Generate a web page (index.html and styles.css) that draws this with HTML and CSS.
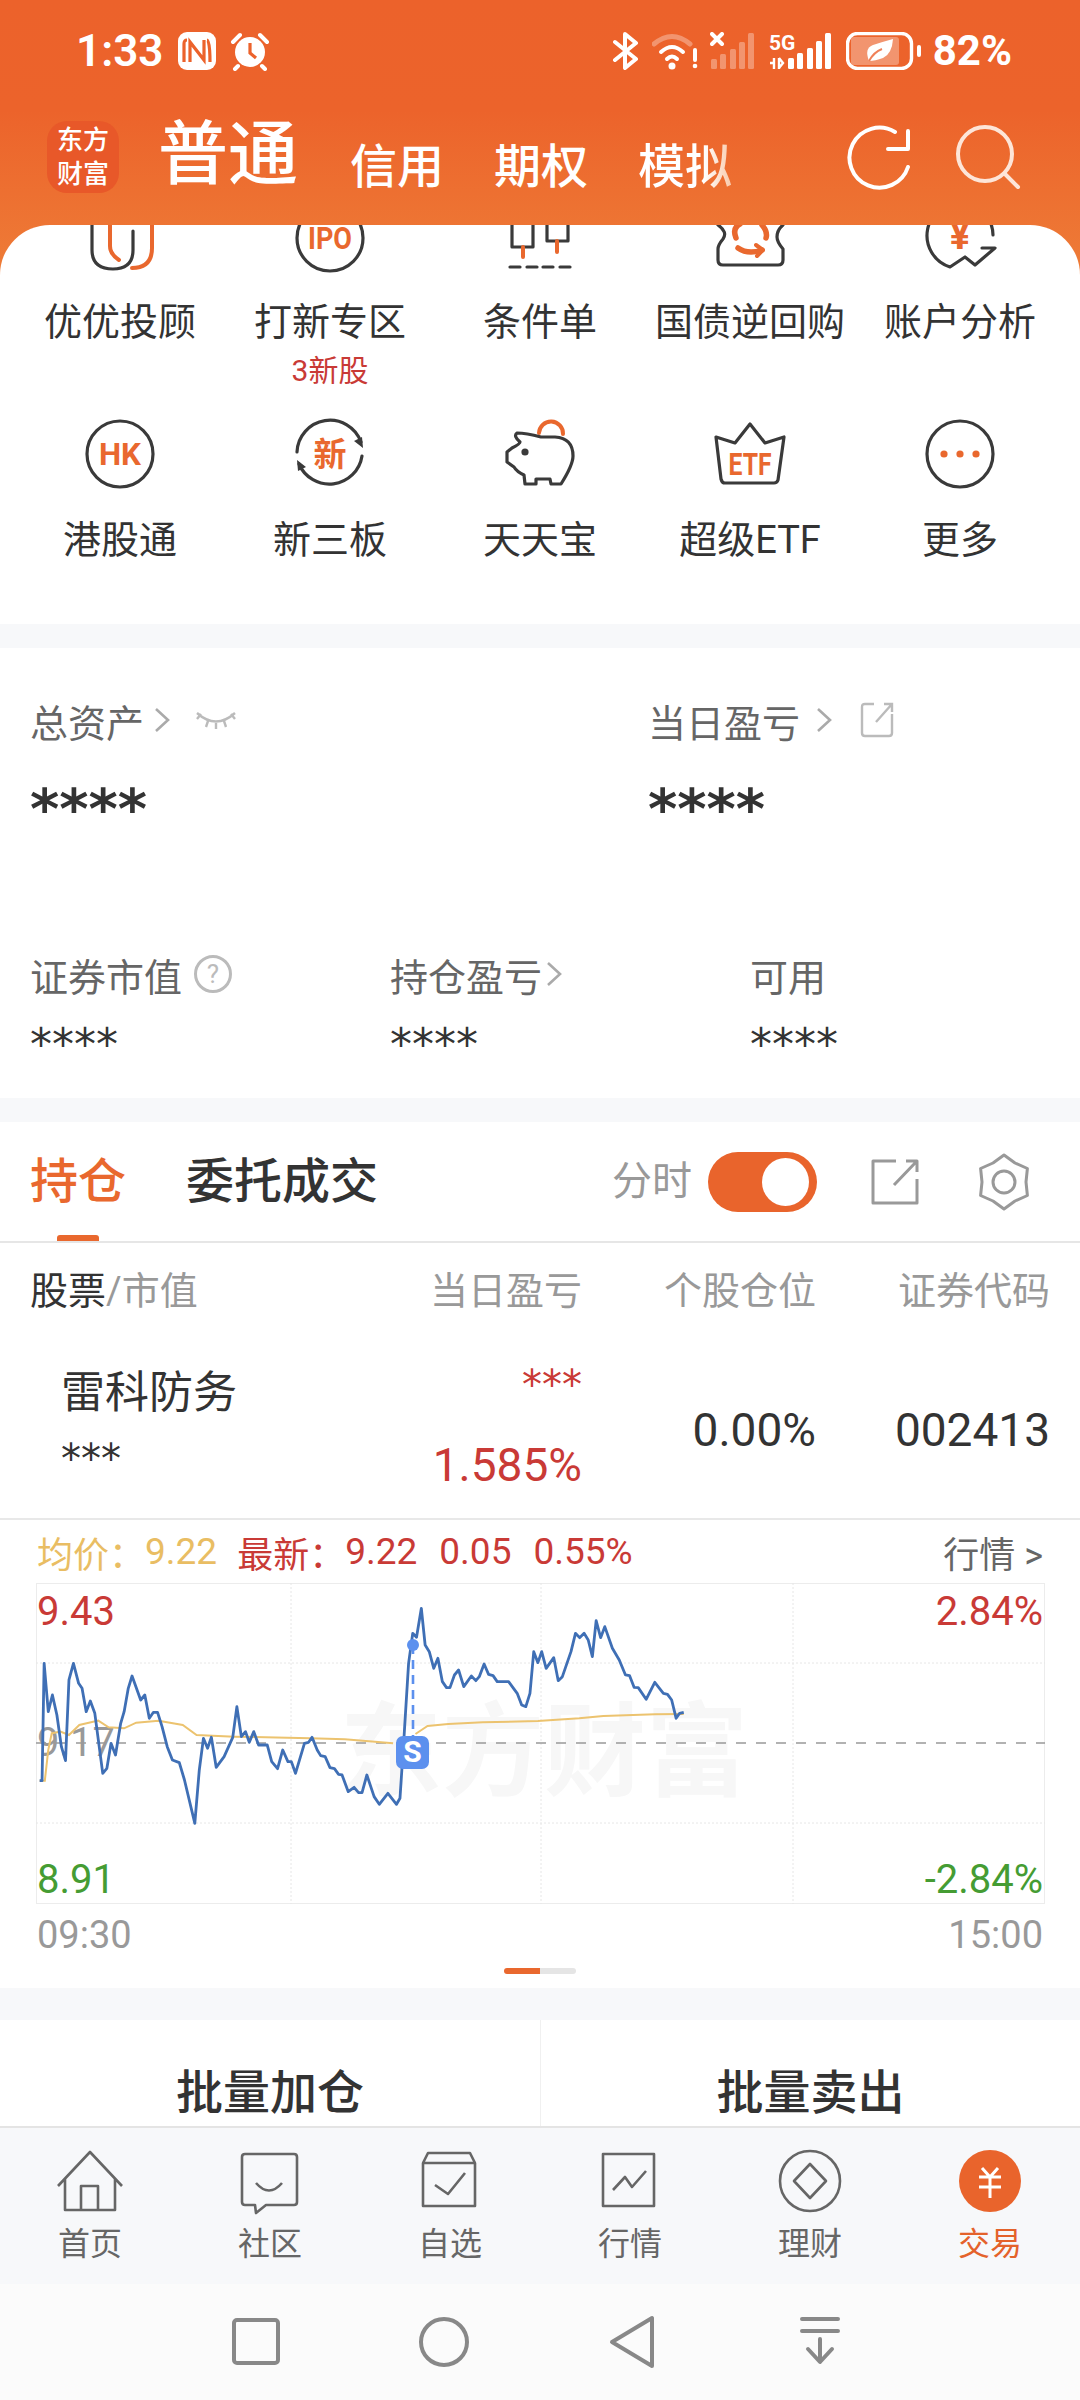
FILE: index.html
```html
<!DOCTYPE html>
<html lang="zh">
<head>
<meta charset="utf-8">
<title>交易</title>
<link rel="stylesheet" href="styles.css">
</head>
<body>
<div class="app">
  <header class="top">
    <div class="status">
      <div class="status-left">
        <span class="clock">1:33</span>
        <svg class="sb" width="40" height="40" viewBox="0 0 40 40"><rect x="1" y="1" width="38" height="38" rx="9" class="w-fill"/><path d="M10 9C7 9 7 11 7 13V31M33 31C33 29 33 9 30 9M13 31V11L27 29V9" class="bg-line"/></svg>
        <svg class="sb" width="40" height="40" viewBox="0 0 40 40"><circle cx="20" cy="21" r="15" class="w-fill"/><path d="M20 12V22L26 27" class="bg-line"/><path d="M3 11L10 4M37 11L30 4M8 35L5 38M32 35L35 38" class="w-line"/></svg>
      </div>
      <div class="status-right">
        <svg width="28" height="38" viewBox="0 0 28 38"><path d="M3 10L24 27L13 36V2L24 11L3 28" class="w-line"/></svg>
        <svg class="gap-s" width="46" height="38" viewBox="0 0 46 38"><path d="M2 12Q20 -3 38 12" class="w-line faint"/><path d="M9 20Q20 10 31 20M15 27Q20 22 25 27" class="w-line"/><circle cx="20" cy="34" r="3.5" class="w-fill"/><path d="M43 18V28" class="w-line"/><circle cx="43" cy="34" r="2.3" class="w-fill"/></svg>
        <svg class="gap-s" width="46" height="38" viewBox="0 0 46 38"><g class="faint"><rect x="1" y="27" width="6" height="10" rx="1.5" class="w-fill"/><rect x="10" y="22" width="6" height="15" rx="1.5" class="w-fill"/><rect x="20" y="17" width="6" height="20" rx="1.5" class="w-fill"/><rect x="29" y="10" width="6" height="27" rx="1.5" class="w-fill"/><rect x="38" y="1" width="6" height="36" rx="1.5" class="w-fill"/></g><path d="M2 2L12 12M12 2L2 12" class="w-line"/></svg>
        <svg class="gap-m" width="64" height="38" viewBox="0 0 64 38"><text x="0" y="18" class="net">5G</text><path d="M5 26V37M1 31H5M10 26V37M10 26L14 31L10 36" class="w-thin"/><rect x="19" y="26" width="6" height="11" rx="1.5" class="w-fill"/><rect x="28" y="21" width="6" height="16" rx="1.5" class="w-fill"/><rect x="38" y="16" width="6" height="21" rx="1.5" class="w-fill"/><rect x="47" y="9" width="6" height="28" rx="1.5" class="w-fill"/><rect x="56" y="1" width="6" height="36" rx="1.5" class="w-fill"/></svg>
        <svg class="gap-m" width="76" height="38" viewBox="0 0 76 38"><rect x="5" y="5" width="48" height="28" rx="3" class="w-fill faint"/><rect x="1.5" y="1.5" width="64" height="35" rx="10" class="w-stroke"/><path d="M23 29Q18 16 27 13Q36 10 47 7Q46 22 37 26Q29 29 23 29Z" class="w-fill"/><path d="M23 29Q28 20 36 17" class="bg-thin"/><rect x="71" y="13" width="4" height="12" rx="2" class="w-fill"/></svg>
        <span class="batt">82%</span>
      </div>
    </div>
    <nav class="acct">
      <div class="logo"><span>东方</span><span>财富</span></div>
      <span class="acct-main">普通</span>
      <div class="acct-subs">
        <span>信用</span><span>期权</span><span class="fade">模拟</span>
      </div>
      <div class="acct-actions">
        <svg width="70" height="70" viewBox="0 0 70 70"><path d="M52 8A30 30 0 1 0 65 43" class="w-line thin"/><path d="M65 7V25H45" class="w-line thin"/></svg>
        <svg class="search" width="70" height="70" viewBox="0 0 70 70"><circle cx="30" cy="30" r="27" class="w-stroke soft"/><path d="M50 50L63 63" class="w-stroke soft"/></svg>
      </div>
    </nav>
  </header>

  <section class="card">
    <div class="entries">
      <div class="entry">
        <svg class="ic" viewBox="0 0 80 80"><path d="M12 20V52Q12 71 33 71Q53 71 53 52V33" class="i-d"/><path d="M30 20V48Q30 56 39 62M72 20V50Q72 70 52 70" class="i-o"/></svg>
        <span class="lbl">优优投顾</span>
      </div>
      <div class="entry">
        <svg class="ic" viewBox="0 0 80 80"><circle cx="40" cy="40" r="33" class="i-d"/><text x="40" y="51" textLength="44" lengthAdjust="spacingAndGlyphs" class="t-o big">IPO</text></svg>
        <span class="lbl">打新专区</span>
        <span class="sub">3新股</span>
      </div>
      <div class="entry">
        <svg class="ic" viewBox="0 0 80 80"><path d="M12 20V49H33V20M47 20V43H68V20" class="i-d"/><path d="M23 49V59M57 43V54" class="i-o"/><path d="M10 69H20M27 69H37M43 69H53M60 69H70" class="i-d"/></svg>
        <span class="lbl">条件单</span>
      </div>
      <div class="entry">
        <svg class="ic" viewBox="0 0 80 80"><path d="M8 27Q18 34 13 41Q8 47 8 51V62Q8 67 13 67H68Q73 67 73 62V51Q67 44 67 39Q67 32 73 27" class="i-d"/><path d="M26 40Q22 30 30 26M52 27Q58 34 56 40M28 50Q38 57 52 52" class="i-o bold"/><path d="M46 47L53 52L47 58" class="i-o"/></svg>
        <span class="lbl">国债逆回购</span>
      </div>
      <div class="entry">
        <svg class="ic" viewBox="0 0 80 80"><path d="M73 37A33 33 0 1 0 30 69L45 59L55 67L75 50H62" class="i-d"/><text x="40" y="51" class="t-o yen">¥</text></svg>
        <span class="lbl">账户分析</span>
      </div>
      <div class="entry low">
        <svg class="ic" viewBox="0 0 80 80"><circle cx="40" cy="40" r="33" class="i-d"/><text x="40" y="51" textLength="42" lengthAdjust="spacingAndGlyphs" class="t-o big">HK</text></svg>
        <span class="lbl">港股通</span>
      </div>
      <div class="entry low">
        <svg class="ic" viewBox="0 0 80 80"><path d="M7 38A33 33 0 0 1 71 28M72 42A33 33 0 0 1 9 50" class="i-d"/><path d="M73 34L64 27L72 23ZM7 46L16 53L8 57Z" class="i-fill"/><text x="40" y="52" class="t-o xin">新</text></svg>
        <span class="lbl">新三板</span>
      </div>
      <div class="entry low">
        <svg class="ic" viewBox="0 0 80 80"><path d="M39 19A12 12 0 0 1 63 20" class="i-o"/><path d="M17 19Q26 19 41 23H55Q73 24 73 42Q73 51 61 70H51L50 65H36V70H25L24 61Q17 58 14 53L7 48V38L12 34Q20 30 20 28Q13 22 17 19Z" class="i-d"/><circle cx="25" cy="38" r="3.6" class="i-fill"/></svg>
        <span class="lbl">天天宝</span>
      </div>
      <div class="entry low">
        <svg class="ic" viewBox="0 0 80 80"><path d="M6 23L25 29L40 10L55 29L74 23L68 66Q67 69 64 69H15Q12 69 11 65Z" class="i-d"/><text x="40" y="61" textLength="43" lengthAdjust="spacingAndGlyphs" class="t-o big">ETF</text></svg>
        <span class="lbl">超级ETF</span>
      </div>
      <div class="entry low">
        <svg class="ic" viewBox="0 0 80 80"><circle cx="40" cy="40" r="33" class="i-d"/><circle cx="24" cy="40" r="3.6" class="o-fill"/><circle cx="40" cy="40" r="3.6" class="o-fill"/><circle cx="56" cy="40" r="3.6" class="o-fill"/></svg>
        <span class="lbl">更多</span>
      </div>
    </div>
  </section>

  <section class="assets band">
    <div class="asset-main">
      <div class="asset-a">
        <div class="asset-label">总资产<svg class="chev" width="16" height="26" viewBox="0 0 16 26"><path d="M2 2L14 13L2 24"/></svg><svg class="eye" width="40" height="20" viewBox="0 0 40 20"><path d="M1 3Q20 20 39 3M1 9L5 4M39 9L35 4M12 11L10 17M20 13V19M28 11L30 17"/></svg></div>
        <div class="stars big-stars">****</div>
      </div>
      <div class="asset-b">
        <div class="asset-label">当日盈亏<svg class="chev wide" width="16" height="26" viewBox="0 0 16 26"><path d="M2 2L14 13L2 24"/></svg><svg class="open" width="34" height="36" viewBox="0 0 34 36"><path d="M14 2H5Q2 2 2 5V31Q2 34 5 34H29Q32 34 32 31V12M16 20L32 2M24 2H32V10"/></svg></div>
        <div class="stars big-stars">****</div>
      </div>
    </div>
    <div class="asset-sub">
      <div>
        <div class="asset-label">证券市值<span class="help">?</span></div>
        <div class="stars small-stars">****</div>
      </div>
      <div>
        <div class="asset-label">持仓盈亏<svg class="chev tight" width="16" height="26" viewBox="0 0 16 26"><path d="M2 2L14 13L2 24"/></svg></div>
        <div class="stars small-stars">****</div>
      </div>
      <div>
        <div class="asset-label">可用</div>
        <div class="stars small-stars">****</div>
      </div>
    </div>
  </section>

  <section class="hold band">
    <div class="tabs">
      <span class="tab on">持仓</span>
      <span class="tab">委托成交</span>
      <div class="tab-tools">
        <span class="tool-text">分时</span>
        <span class="toggle"><span class="knob"></span></span>
        <svg class="tool-share" width="48" height="46" viewBox="0 0 48 46"><path d="M25 2H2V44H46V20M23 26L45 3M35 2H46V13"/></svg>
        <svg class="tool-gear" width="60" height="60" viewBox="0 0 60 60"><path d="M30 3L41 11L53.4 16.5L52 30L53.4 43.5L41 49L30 57L19 49L6.6 43.5L8 30L6.6 16.5L19 11Z"/><circle cx="30" cy="30" r="11"/></svg>
      </div>
    </div>
    <div class="thead">
      <span class="th-first"><b>股票</b>/市值</span>
      <span>当日盈亏</span>
      <span>个股仓位</span>
      <span>证券代码</span>
    </div>
    <div class="trow">
      <div class="cell-name">
        <span class="stock">雷科防务</span>
        <span class="stars row-stars">***</span>
      </div>
      <div class="cell-pl">
        <span class="stars row-stars red">***</span>
        <span class="num red pl-pct">1.585%</span>
      </div>
      <div class="num cell-mid">0.00%</div>
      <div class="num cell-mid">002413</div>
    </div>
    <div class="quote">
      <span class="yellow">均价：</span><span class="yellow q-val">9.22</span>
      <span class="red q-lab">最新：</span><span class="red q-val">9.22</span><span class="red q-val q-gap">0.05</span><span class="red q-val q-gap">0.55%</span>
      <span class="q-more">行情 &gt;</span>
    </div>
    <div class="chart">
      <span class="wm">东方财富</span>
      <span class="ch-l red ch-top">9.43</span>
      <span class="ch-l grey ch-mid">9.17</span>
      <span class="ch-l green ch-bot">8.91</span>
      <span class="ch-r red ch-top">2.84%</span>
      <span class="ch-r green ch-bot">-2.84%</span>
      <svg class="plot" width="1009" height="321" viewBox="36 1583 1009 321">
        <rect x="36" y="1583" width="1009" height="321" class="frame"/>
        <path d="M36 1663H1045M36 1823H1045M291 1583V1904M541 1583V1904M793 1583V1904" class="dots"/>
        <path d="M36 1743H1045" class="dash"/>
        <g transform="translate(0 1530) scale(.3448 .3333)">
          <polyline class="avg" points="115,752 130,752 140,660 150,610 175,605 200,615 230,585 285,572 315,592 360,595 395,578 460,572 530,585 570,615 680,620 900,625 1000,628 1140,640"/>
          <polyline class="avg" points="1205,612 1240,588 1300,582 1400,577 1560,573 1680,565 1750,558 1900,553 1983,552"/>
          <polyline class="price" points="115,752 122,752 128,400 140,545 152,495 165,555 178,650 190,692 200,450 213,400 228,460 238,475 250,545 262,513 275,550 298,730 310,715 322,640 335,675 350,580 360,545 372,475 383,438 408,510 420,495 433,565 445,547 457,547 470,590 485,650 500,690 520,698 535,750 565,880 578,720 590,625 602,655 613,622 627,712 650,680 675,622 687,530 700,620 712,605 723,637 736,605 750,645 775,645 788,695 805,716 820,660 835,695 845,695 857,730 883,640 895,637 905,622 920,660 930,677 943,680 957,713 970,716 982,733 992,735 1010,785 1027,772 1040,788 1050,788 1064,735 1085,800 1100,823 1125,790 1150,823 1160,805 1170,650 1185,400 1197,310 1208,322 1222,235 1233,345 1245,365 1258,415 1270,385 1283,455 1295,473 1305,473 1318,435 1330,420 1345,470 1367,438 1380,452 1390,440 1404,402 1417,433 1430,437 1442,455 1475,455 1500,490 1513,525 1525,530 1537,490 1548,365 1560,398 1571,365 1584,415 1606,383 1619,452 1631,440 1656,365 1669,310 1681,323 1694,310 1706,330 1718,380 1729,272 1742,323 1754,290 1776,355 1796,390 1814,435 1826,437 1839,472 1851,473 1874,508 1899,457 1924,490 1936,493 1948,510 1961,565 1971,550 1983,547"/>
        </g>
        <path d="M413 1645V1738" class="marker"/>
        <circle cx="413" cy="1645" r="6" class="marker-dot"/>
        <rect x="396" y="1736" width="33" height="33" rx="7" class="marker-box"/>
        <text x="412.500" y="1762" class="marker-s">S</text>
      </svg>
    </div>
    <div class="axis"><span>09:30</span><span>15:00</span></div>
    <div class="pager"><span class="pg on"></span><span class="pg"></span></div>
  </section>

  <section class="batch">
    <span>批量加仓</span>
    <span>批量卖出</span>
  </section>

  <footer class="tabbar">
    <div class="tb">
      <svg width="70" height="70" viewBox="0 0 70 70"><path d="M3 40L35 6L67 40M10 32V64H60V32M26 64V40H43V64"/></svg>
      <span>首页</span>
    </div>
    <div class="tb">
      <svg width="70" height="70" viewBox="0 0 70 70"><path d="M10 8H59Q62 8 62 11V56Q62 59 59 59H31L21 67L20 59H10Q7 59 7 56V11Q7 8 10 8ZM21 37Q34 52 47 37"/></svg>
      <span>社区</span>
    </div>
    <div class="tb">
      <svg width="70" height="70" viewBox="0 0 70 70"><path d="M8 17H60V60H8ZM8 17L13 7H55L60 17M20 39L33 48L50 27"/></svg>
      <span>自选</span>
    </div>
    <div class="tb">
      <svg width="70" height="70" viewBox="0 0 70 70"><path d="M8 8H59V60H8ZM18 44L30 31L37 41L51 25"/></svg>
      <span>行情</span>
    </div>
    <div class="tb">
      <svg width="70" height="70" viewBox="0 0 70 70"><circle cx="35" cy="35" r="30"/><path d="M35 18L51 35L35 52L19 35Z"/></svg>
      <span>理财</span>
    </div>
    <div class="tb act">
      <svg width="70" height="70" viewBox="0 0 70 70"><circle cx="35" cy="35" r="31" class="act-bg"/><path d="M27 22L35 31L43 22M24 31H46M24 41H46M35 31V52" class="act-y"/></svg>
      <span>交易</span>
    </div>
  </footer>

  <div class="sysnav">
    <svg width="60" height="60" viewBox="0 0 60 60"><rect x="8" y="8" width="44" height="43" rx="3"/></svg>
    <svg width="60" height="60" viewBox="0 0 60 60"><circle cx="30" cy="30" r="23"/></svg>
    <svg width="60" height="60" viewBox="0 0 60 60"><path d="M50 6V54L10 30Z"/></svg>
    <svg width="60" height="60" viewBox="0 0 60 60"><path d="M12 7H48M12 19H48M30 27V48M18 37L30 50L42 37"/></svg>
  </div>
</div>
</body>
</html>
```
FILE: styles.css
```css
* { box-sizing: border-box; }
html, body { margin: 0; padding: 0; }
body { width: 1080px; height: 2400px; overflow: hidden; font-family: Roboto, "Noto Sans CJK SC", sans-serif; color: #333; }
.app { width: 1080px; height: 2400px; background: #f7f8fa; display: flex; flex-direction: column; overflow: hidden; }
svg { display: block; flex: none; }

.top { height: 275px; background: linear-gradient(180deg, #ec622b 0, #ec632b 110px, #ee7c37 275px); color: #fff; flex: none; }
.status { height: 100px; padding: 1px 68px 0 76px; display: flex; justify-content: space-between; align-items: center; }
.status-left, .status-right { display: flex; align-items: center; }
.clock { font-size: 44px; font-weight: 600; line-height: 50px; width: 101px; }
.sb + .sb { margin-left: 13px; }
.gap-s { margin-left: 12px; }
.gap-m { margin-left: 13px; }
.w-fill { fill: #fff; }
.w-line { fill: none; stroke: #fff; stroke-width: 4; stroke-linecap: round; stroke-linejoin: round; }
.w-line.thin { stroke-width: 4; }
.w-thin { fill: none; stroke: #fff; stroke-width: 2.4; }
.w-stroke { fill: none; stroke: #fff; stroke-width: 3.4; }
.w-stroke.soft { stroke: #fde5d8; stroke-width: 4; stroke-linecap: round; }
.bg-line { fill: none; stroke: #ec622b; stroke-width: 3.2; }
.bg-thin { fill: none; stroke: #f08058; stroke-width: 2; }
.faint { opacity: .32; }
.w-line.faint { opacity: .32; stroke-width: 5; }
.net { font: 700 21px Roboto, sans-serif; fill: #fff; }
.batt { font-size: 42px; font-weight: 700; line-height: 50px; margin-left: 11px; }

.acct { height: 125px; padding: 21px 0 0 47px; display: flex; align-items: flex-start; }
.logo { width: 72px; height: 72px; border-radius: 20px; background: #e85829; display: flex; flex-direction: column; align-items: center; justify-content: center; font-size: 26px; line-height: 34px; font-weight: 500; }
.acct-main { font-size: 70px; line-height: 80px; font-weight: 500; margin-left: 39px; margin-top: -6px; }
.acct-subs { display: flex; gap: 50px; font-size: 47px; line-height: 56px; margin-left: 52px; margin-top: 18px; font-weight: 500; }
.fade { background: linear-gradient(90deg, #fff 70%, #f9c8a8 100%); -webkit-background-clip: text; background-clip: text; color: transparent; }
.acct-actions { display: flex; margin-left: 111px; margin-top: 3px; gap: 0; }
.search { margin-left: 42px; }

.card { background: #fff; border-radius: 50px 50px 0 0; margin-top: -50px; height: 399px; overflow: hidden; flex: none; position: relative; }
.entries { margin-top: -27px; display: grid; grid-template-columns: repeat(5, 210px); grid-template-rows: 216px 210px; padding-left: 15px; }
.entry { display: flex; flex-direction: column; align-items: center; }
.ic { width: 80px; height: 80px; }
.lbl { font-size: 38px; line-height: 48px; margin-top: 20px; white-space: nowrap; color: #333; }
.low .lbl { margin-top: 22px; }
.sub { font-size: 30px; line-height: 40px; color: #c93a36; margin-top: 5px; }
.i-d { fill: none; stroke: #3a3a3a; stroke-width: 3.2; stroke-linecap: round; stroke-linejoin: round; }
.i-o { fill: none; stroke: #e9682e; stroke-width: 4; stroke-linecap: round; stroke-linejoin: round; }
.i-o.bold { stroke-width: 5.5; }
.i-fill { fill: #3a3a3a; }
.o-fill { fill: #e9682e; }
.t-o { fill: #e9682e; text-anchor: middle; font-family: Roboto, "Noto Sans CJK SC", sans-serif; font-weight: 700; }
.t-o.big { font-size: 31px; }
.t-o.yen { font-size: 38px; }
.t-o.xin { font-size: 33px; font-family: "Noto Sans CJK SC", sans-serif; }

.band { margin-top: 24px; }
.assets { background: #fff; height: 450px; flex: none; padding: 48px 0 0 30px; }
.asset-main { display: grid; grid-template-columns: 618px 1fr; height: 254px; }
.asset-sub { display: grid; grid-template-columns: 360px 360px 1fr; }
.asset-label { display: flex; align-items: center; height: 48px; font-size: 38px; color: #666; white-space: nowrap; }
.stars { font-family: "DejaVu Sans", sans-serif; color: #333; white-space: nowrap; }
.big-stars { font-size: 56px; font-weight: 700; line-height: 60px; margin-top: 35px; }
.small-stars { font-size: 44px; line-height: 50px; margin-top: 22px; }
.chev { fill: none; margin-left: 10px; }
.chev path { fill: none; stroke: #aaa; stroke-width: 2.6; }
.chev.wide { margin-left: 16px; }
.chev.tight { margin-left: 4px; }
.eye { margin-left: 26px; }
.eye path, .open path { fill: none; stroke: #bbb; stroke-width: 2.4; }
.open { margin-left: 28px; }
.help { width: 38px; height: 38px; border: 3px solid #bbb; border-radius: 50%; margin-left: 12px; color: #bbb; font-size: 26px; line-height: 32px; text-align: center; }

.hold { background: #fff; height: 866px; flex: none; }
.tabs { height: 121px; border-bottom: 2px solid #e6e6e6; display: flex; align-items: center; padding: 0 0 0 30px; gap: 60px; position: relative; }
.tab { font-size: 48px; line-height: 60px; color: #333; font-weight: 500; }
.tab.on { color: #e9682e; }
.tab.on::after { content: ""; position: absolute; left: 57px; bottom: 0; width: 42px; height: 6px; border-radius: 3px 3px 0 0; background: #e9682e; }
.tab-tools { position: absolute; left: 612px; top: 30px; display: flex; align-items: center; }
.tool-text { font-size: 40px; line-height: 60px; color: #999; }
.toggle { width: 109px; height: 60px; border-radius: 30px; background: #e9642c; margin-left: 16px; display: flex; justify-content: flex-end; align-items: center; padding-right: 8px; }
.knob { width: 47px; height: 48px; border-radius: 50%; background: #fff; }
.tool-share { margin-left: 54px; }
.tool-share path, .tool-gear path, .tool-gear circle { fill: none; stroke: #999; stroke-width: 3; stroke-linejoin: round; }
.tool-gear { margin-left: 55px; }

.thead, .trow { display: grid; grid-template-columns: 1fr 234px 234px; padding: 0 30px 0 30px; }
.thead { grid-template-columns: 1fr 234px 234px 234px; padding-top: 24px; font-size: 38px; line-height: 48px; color: #999; text-align: right; }
.th-first { text-align: left; white-space: nowrap; }
.th-first b { font-weight: 400; color: #333; }
.trow { grid-template-columns: 1fr 234px 234px 234px; height: 205px; border-bottom: 2px solid #e8e8e8; }
.num { font-size: 46px; line-height: 50px; }
.cell-name { display: flex; flex-direction: column; padding: 53px 0 0 31px; }
.stock { font-size: 44px; line-height: 50px; color: #333; }
.row-stars { font-size: 40px; line-height: 40px; margin-top: 21px; }
.cell-pl { display: flex; flex-direction: column; align-items: flex-end; padding-top: 50px; }
.cell-pl .row-stars { margin-top: 0; }
.pl-pct { margin-top: 35px; }
.cell-mid { text-align: right; padding-top: 90px; color: #333; }
.red { color: #c93a36; }
.yellow { color: #e9bd63; }
.green { color: #459c33; }
.grey { color: #999; }

.quote { height: 63px; display: flex; align-items: center; font-size: 36px; padding: 0 37px; white-space: nowrap; }
.q-val { font-size: 37px; }
.q-lab { margin-left: 20px; }
.q-gap { margin-left: 22px; }
.q-more { margin-left: auto; color: #666; }

.chart { margin-left: 36px; width: 1009px; height: 321px; position: relative; overflow: hidden; }
.wm { position: absolute; left: 304px; top: 96px; font-size: 102px; line-height: 130px; font-weight: 700; color: #f7f7f7; font-family: "Noto Sans CJK SC", sans-serif; white-space: nowrap; }
.ch-l, .ch-r { position: absolute; font-size: 40px; line-height: 48px; white-space: nowrap; }
.ch-l { left: 1px; }
.ch-r { right: 2px; }
.ch-top { top: 5px; }
.ch-mid { top: 136px; }
.ch-bot { bottom: 0; }
.plot { position: absolute; left: 0; top: 0; }
.frame { fill: none; stroke: #ececec; stroke-width: 2; }
.dots { fill: none; stroke: #e6e6e6; stroke-width: 1; stroke-dasharray: 2 2; }
.dash { fill: none; stroke: #999; stroke-width: 1.4; stroke-dasharray: 10 10; }
.avg { fill: none; stroke: #ecc36f; stroke-width: 2; vector-effect: non-scaling-stroke; }
.price { fill: none; stroke: #3f6fb5; stroke-width: 2.8; stroke-linejoin: round; vector-effect: non-scaling-stroke; }
.marker { fill: none; stroke: #5c90ee; stroke-width: 2.6; stroke-dasharray: 9 6; }
.marker-dot { fill: #5c90ee; }
.marker-box { fill: #5c90ee; }
.marker-s { fill: #fff; font: 700 30px Roboto, sans-serif; text-anchor: middle; }

.axis { display: flex; justify-content: space-between; padding: 7px 37px 0; font-size: 38px; line-height: 48px; color: #999; }
.pager { display: flex; justify-content: center; margin-top: 9px; padding-right: 0; }
.pg { width: 36px; height: 6px; background: #e5e5e5; border-radius: 0 3px 3px 0; }
.pg.on { background: #e9682e; border-radius: 3px 0 0 3px; }

.batch { margin-top: 32px; height: 108px; flex: none; background: #fff; border-bottom: 2px solid #e4e4e4; display: grid; grid-template-columns: 1fr 1fr; font-size: 47px; font-weight: 500; }
.batch span { display: flex; align-items: center; justify-content: center; padding-top: 30px; color: #333; }
.batch span + span { border-left: 1px solid #f0f0f0; }

.tabbar { height: 156px; flex: none; background: #f7f8fa; display: grid; grid-template-columns: repeat(6, 180px); padding-top: 18px; }
.tb { display: flex; flex-direction: column; align-items: center; font-size: 32px; line-height: 40px; color: #666; }
.tb svg path, .tb svg circle { fill: none; stroke: #666; stroke-width: 2.6; stroke-linejoin: round; }
.tb span { margin-top: 8px; }
.tb.act { color: #e4622b; }
.tb svg .act-bg { fill: #e9642c; stroke: none; }
.tb svg .act-y { stroke: #fff; stroke-width: 3; }

.sysnav { flex: 1; background: #fbfbfb; display: flex; align-items: center; padding-left: 226px; gap: 128px; }
.sysnav svg * { fill: none; stroke: #888; stroke-width: 4; stroke-linejoin: round; stroke-linecap: round; }
```
